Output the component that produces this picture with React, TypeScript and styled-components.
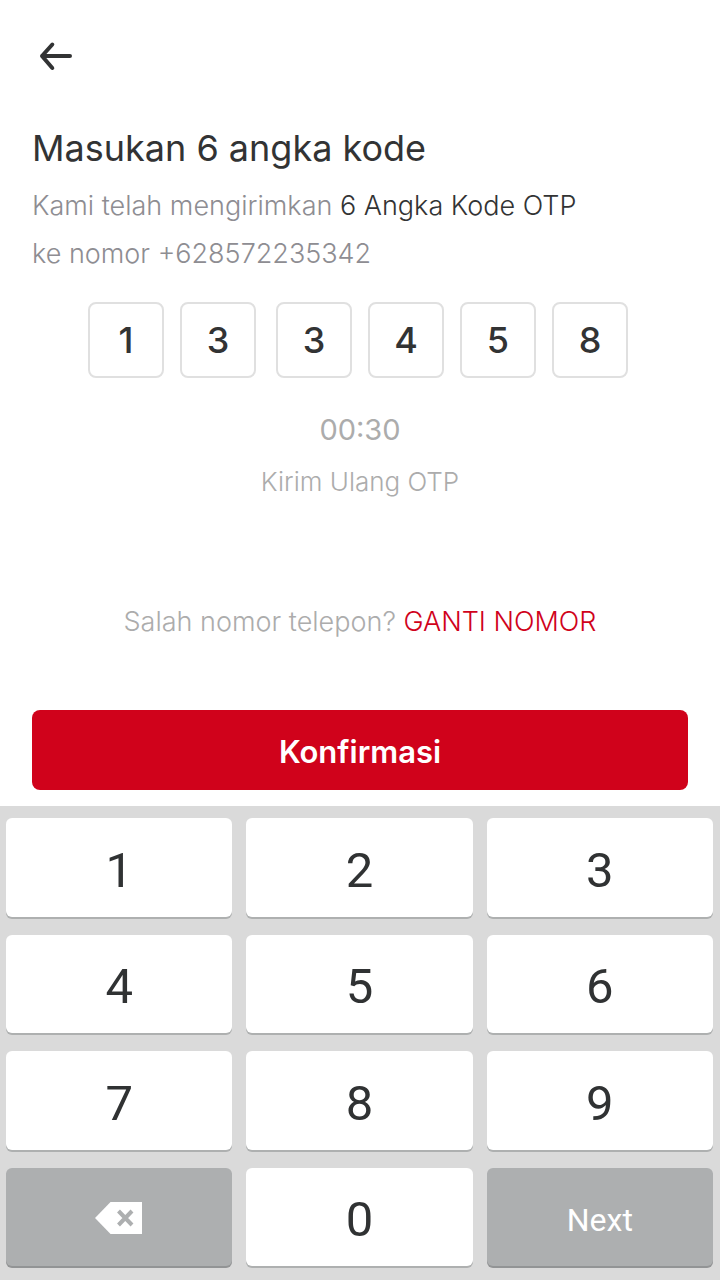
import React, { useState } from "react";
import styled, { createGlobalStyle } from "styled-components";

const GlobalStyle = createGlobalStyle`
  *, *::before, *::after { box-sizing: border-box; }
  body {
    margin: 0;
    background: #ffffff;
    font-family: Inter, "Open Sans", sans-serif;
    color: #323334;
  }
  button, input { font-family: inherit; color: inherit; }
`;

const Screen = styled.div`
  display: flex;
  flex-direction: column;
  min-height: 100vh;
`;

const Content = styled.main`
  display: flex;
  flex-direction: column;
  padding: 32px 32px 16px;
`;

const BackButton = styled.button`
  display: flex;
  align-self: flex-start;
  padding: 0;
  border: 0;
  background: none;
  cursor: pointer;
`;

const Title = styled.h1`
  margin: 44px 0 10px;
  font-size: 36px;
  font-weight: 400;
  line-height: 48px;
`;

const Message = styled.p`
  margin: 0;
  font-size: 27px;
  font-weight: 300;
  line-height: 48px;
  color: #8e8d92;
`;

const Emphasis = styled.span`
  color: #323334;
`;

const CodeRow = styled.div`
  display: flex;
  justify-content: center;
  gap: 20px;
  margin: 24px 0 28px;
  padding-right: 4px;
`;

const CodeGroup = styled.div`
  display: flex;
  gap: 16px;
`;

const CodeInput = styled.input`
  width: 76px;
  height: 76px;
  padding: 0;
  border: 2px solid #e0e0e0;
  border-radius: 8px;
  background: #ffffff;
  font-size: 36px;
  font-weight: 500;
  text-align: center;
  outline: none;
`;

const Resend = styled.div`
  display: flex;
  flex-direction: column;
  align-items: center;
  color: #acacac;
`;

const Timer = styled.time`
  font-size: 29px;
  line-height: 48px;
`;

const ResendButton = styled.button`
  padding: 0;
  border: 0;
  background: none;
  font-size: 26px;
  font-weight: 300;
  line-height: 56px;
  cursor: pointer;
`;

const ChangeNumber = styled.p`
  margin: 88px 0 64px;
  font-size: 27px;
  font-weight: 300;
  line-height: 48px;
  text-align: center;
  color: #acacac;
`;

const ChangeLink = styled.a`
  color: #d0021b;
  text-decoration: none;
`;

const ConfirmButton = styled.button`
  height: 80px;
  padding: 2px 0 0;
  border: 0;
  border-radius: 8px;
  background: #d0021b;
  color: #ffffff;
  font-size: 31px;
  font-weight: 600;
  cursor: pointer;
`;

const Keypad = styled.section`
  flex: 1;
  display: grid;
  grid-template-columns: repeat(3, 1fr);
  grid-auto-rows: minmax(72px, 1fr);
  gap: 18px 14px;
  padding: 12px 7px 14px 6px;
  background: #dadada;
`;

const Key = styled.button<{ $action?: boolean }>`
  display: flex;
  align-items: center;
  justify-content: center;
  padding: 6px 0 0;
  border: 0;
  border-radius: 6px;
  background: ${(p) => (p.$action ? "#adafb0" : "#ffffff")};
  box-shadow: 0 2px 0 ${(p) => (p.$action ? "#929495" : "#aeb0b0")};
  color: ${(p) => (p.$action ? "#ffffff" : "#303233")};
  font-family: Roboto, sans-serif;
  font-size: ${(p) => (p.$action ? "32px" : "49px")};
  font-weight: 400;
  cursor: pointer;
`;

const ArrowIcon = () => (
  <svg width="48" height="48" viewBox="0 0 48 48" fill="none" aria-hidden="true">
    <path
      d="M38 24H10M20.300 12.500L10 24L20.300 36"
      stroke="#323334"
      strokeWidth="4"
      strokeLinecap="round"
      strokeLinejoin="round"
    />
  </svg>
);

const DeleteIcon = () => (
  <svg width="48" height="36" viewBox="0 0 48 36" aria-hidden="true">
    <path d="M0 16L15.500 0H47V32H15.500Z" fill="#ffffff" />
    <path
      d="M23.500 9L37 23M37 9L23.500 23"
      stroke="#adafb0"
      strokeWidth="4"
    />
  </svg>
);

const digits = ["1", "2", "3", "4", "5", "6", "7", "8", "9"];

export default function App() {
  const [code, setCode] = useState(["1", "3", "3", "4", "5", "8"]);

  const setDigit = (index: number, value: string) =>
    setCode((current) => current.map((d, i) => (i === index ? value : d)));

  const press = (digit: string) => {
    const next = code.indexOf("");
    if (next >= 0) setDigit(next, digit);
  };

  const erase = () => {
    const empty = code.indexOf("");
    const last = empty < 0 ? code.length - 1 : empty - 1;
    if (last >= 0) setDigit(last, "");
  };

  const renderInputs = (start: number, end: number) =>
    code.slice(start, end).map((digit, i) => (
      <CodeInput
        key={start + i}
        aria-label={`Angka ${start + i + 1}`}
        inputMode="numeric"
        maxLength={1}
        value={digit}
        onChange={(e) => setDigit(start + i, e.target.value)}
      />
    ));

  return (
    <>
      <GlobalStyle />
      <Screen>
        <Content>
          <BackButton type="button" aria-label="Kembali">
            <ArrowIcon />
          </BackButton>
          <Title>Masukan 6 angka kode</Title>
          <Message>
            Kami telah mengirimkan <Emphasis>6 Angka Kode OTP</Emphasis>
            <br />
            ke nomor +628572235342
          </Message>
          <CodeRow role="group" aria-label="Kode OTP">
            <CodeGroup>{renderInputs(0, 2)}</CodeGroup>
            <CodeGroup>{renderInputs(2, 6)}</CodeGroup>
          </CodeRow>
          <Resend>
            <Timer>00:30</Timer>
            <ResendButton type="button">Kirim Ulang OTP</ResendButton>
          </Resend>
          <ChangeNumber>
            Salah nomor telepon? <ChangeLink href="#nomor">GANTI NOMOR</ChangeLink>
          </ChangeNumber>
          <ConfirmButton type="button">Konfirmasi</ConfirmButton>
        </Content>
        <Keypad aria-label="Papan angka">
          {digits.map((digit) => (
            <Key key={digit} type="button" onClick={() => press(digit)}>
              {digit}
            </Key>
          ))}
          <Key $action type="button" aria-label="Hapus" onClick={erase}>
            <DeleteIcon />
          </Key>
          <Key type="button" onClick={() => press("0")}>
            0
          </Key>
          <Key $action type="button">
            Next
          </Key>
        </Keypad>
      </Screen>
    </>
  );
}
